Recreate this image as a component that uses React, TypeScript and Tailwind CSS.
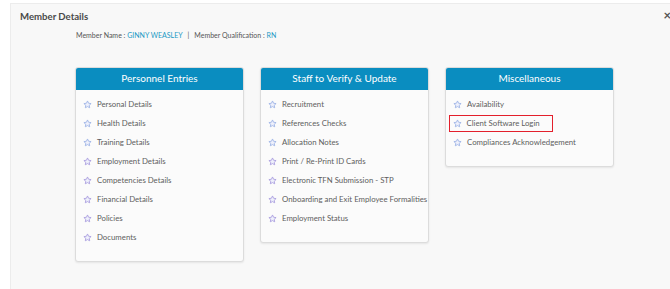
import React from "react";

const Star: React.FC<{ tone: string }> = ({ tone }) => (
    <svg width="9" height="9" viewBox="0 0 24 24" className="shrink-0">
        <path
            d="M12 2.5l2.9 6.2 6.7.8-5 4.6 1.3 6.7L12 17.5l-5.9 3.3 1.3-6.7-5-4.6 6.7-.8z"
            fill="#eef0fb"
            stroke={tone}
            strokeWidth="2.4"
            strokeLinejoin="round"
        />
    </svg>
);

type Card = { title: string; items: string[]; boxed?: string };

const cards: Card[] = [
    {
        title: "Personnel Entries",
        items: [
            "Personal Details",
            "Health Details",
            "Training Details",
            "Employment Details",
            "Competencies Details",
            "Financial Details",
            "Policies",
            "Documents",
        ],
    },
    {
        title: "Staff to Verify & Update",
        items: [
            "Recruitment",
            "References Checks",
            "Allocation Notes",
            "Print / Re-Print ID Cards",
            "Electronic TFN Submission - STP",
            "Onboarding and Exit Employee Formalities",
            "Employment Status",
        ],
    },
    {
        title: "Miscellaneous",
        items: ["Availability", "Client Software Login", "Compliances Acknowledgement"],
        boxed: "Client Software Login",
    },
];

export default function App() {
    return (
        <div className="min-h-screen bg-white pt-[3px] pl-[10px]" style={{ fontFamily: "Lato, 'Open Sans', sans-serif" }}>
            <div className="relative h-[286px] bg-[#f8f8f8] border-l border-t border-[#ececec]">
                {/* --- HEADER --- */}
                <div className="pl-[9px] pt-[6px] text-[9.6px] font-bold text-[#4a4a4a]">Member Details</div>
                <span className="absolute right-[-1px] top-[5px] text-[13px] font-bold leading-none text-[#555]">×</span>

                <div className="mt-[6px] pl-[65px] text-[7px] text-[#555]">
                    Member Name : <span className="text-[#1b98c4]">GINNY WEASLEY</span>
                    <span className="mx-[5px]">|</span>
                    Member Qualification : <span className="text-[#1b98c4]">RN</span>
                </div>

                {/* --- CARDS --- */}
                <div className="mt-[26px] ml-[64px] flex items-start gap-[16px]">
                    {cards.map((card) => (
                        <div
                            key={card.title}
                            className="w-[169px] rounded-[3px] border border-[#dcdcdc] bg-[#fbfbfb] shadow-[0_1px_2px_rgba(0,0,0,0.08)]"
                        >
                            <div className="flex h-[22px] items-center justify-center rounded-t-[2px] bg-[#0a8dc0] text-[10px] text-white">
                                {card.title}
                            </div>
                            <ul className="pt-[5px] pb-[14px]">
                                {card.items.map((item, i) => (
                                    <li key={item} className="flex h-[19px] items-center">
                                        <div
                                            className={
                                                item === card.boxed
                                                    ? "ml-[3px] flex h-[17px] items-center gap-[5px] pl-[2.5px] pr-[12px] border-[1.5px] border-[#e3202c]"
                                                    : "flex items-center gap-[5px] pl-[7px]"
                                            }
                                        >
                                            <Star tone={i < 3 ? "#9fb6e6" : "#ac9fe0"} />
                                            <span className="text-[7.8px] text-[#5e5e5e] whitespace-nowrap">{item}</span>
                                        </div>
                                    </li>
                                ))}
                            </ul>
                        </div>
                    ))}
                </div>
            </div>
        </div>
    );
}
